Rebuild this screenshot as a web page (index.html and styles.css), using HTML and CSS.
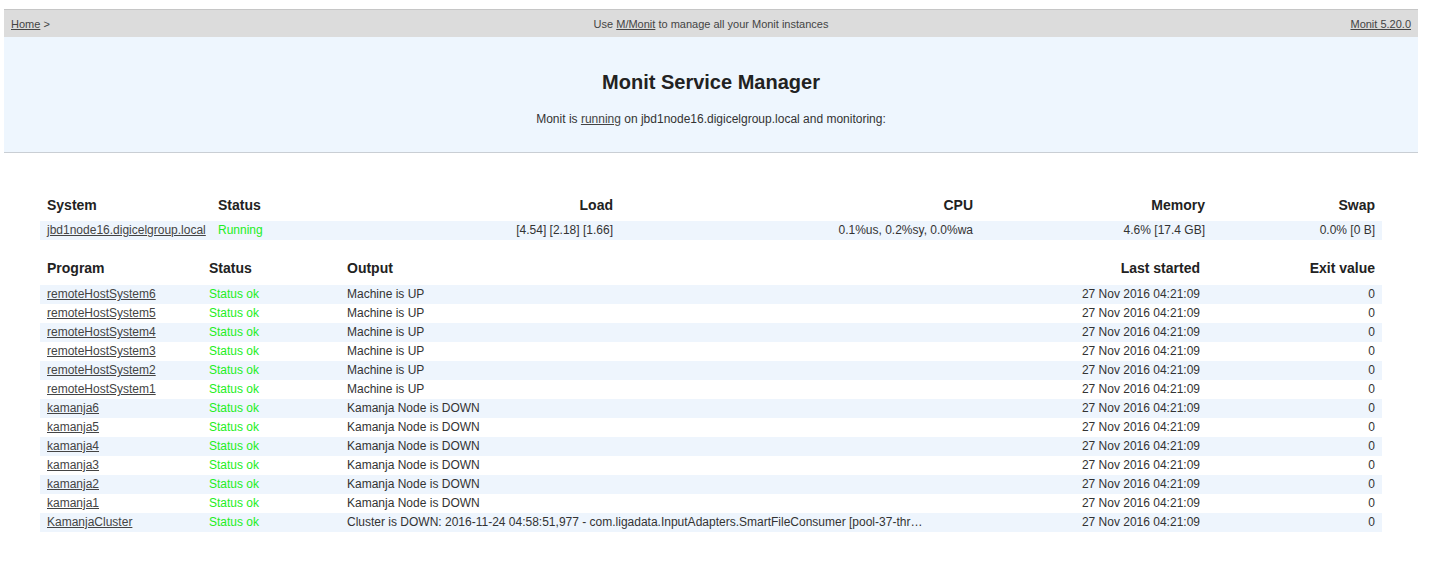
FILE: index.html
```html
<!DOCTYPE html>
<html>
<head>
<meta charset="utf-8">
<title>Monit Service Manager</title>
<link rel="stylesheet" href="styles.css">
</head>
<body>
<div class="page">
  <div class="topbar">
    <div class="crumbs"><a href="#">Home</a> &gt;</div>
    <div class="promo">Use <a href="#">M/Monit</a> to manage all your Monit instances</div>
    <div class="version"><a href="#">Monit 5.20.0</a></div>
  </div>
  <div class="header">
    <h1>Monit Service Manager</h1>
    <p>Monit is <a href="#">running</a> on jbd1node16.digicelgroup.local and monitoring:</p>
  </div>
  <div class="content">
    <table class="tbl sys">
      <colgroup><col class="c1"><col class="c2"><col class="c3"><col class="c4"><col class="c5"><col class="c6"></colgroup>
      <thead>
        <tr><th>System</th><th>Status</th><th class="r">Load</th><th class="r">CPU</th><th class="r">Memory</th><th class="r">Swap</th></tr>
      </thead>
      <tbody>
        <tr class="stripe"><td><a href="#">jbd1node16.digicelgroup.local</a></td><td class="ok">Running</td><td class="r">[4.54]&nbsp;[2.18]&nbsp;[1.66]</td><td class="r">0.1%us,&nbsp;0.2%sy,&nbsp;0.0%wa</td><td class="r">4.6% [17.4&nbsp;GB]</td><td class="r">0.0% [0&nbsp;B]</td></tr>
      </tbody>
    </table>
    <table class="tbl prog">
      <colgroup><col class="p1"><col class="p2"><col class="p3"><col class="p4"><col class="p5"></colgroup>
      <thead>
        <tr><th>Program</th><th>Status</th><th>Output</th><th class="r">Last started</th><th class="r">Exit value</th></tr>
      </thead>
      <tbody>
        <tr class="stripe"><td><a href="#">remoteHostSystem6</a></td><td class="ok">Status ok</td><td>Machine is UP</td><td class="r">27 Nov 2016 04:21:09</td><td class="r">0</td></tr>
        <tr><td><a href="#">remoteHostSystem5</a></td><td class="ok">Status ok</td><td>Machine is UP</td><td class="r">27 Nov 2016 04:21:09</td><td class="r">0</td></tr>
        <tr class="stripe"><td><a href="#">remoteHostSystem4</a></td><td class="ok">Status ok</td><td>Machine is UP</td><td class="r">27 Nov 2016 04:21:09</td><td class="r">0</td></tr>
        <tr><td><a href="#">remoteHostSystem3</a></td><td class="ok">Status ok</td><td>Machine is UP</td><td class="r">27 Nov 2016 04:21:09</td><td class="r">0</td></tr>
        <tr class="stripe"><td><a href="#">remoteHostSystem2</a></td><td class="ok">Status ok</td><td>Machine is UP</td><td class="r">27 Nov 2016 04:21:09</td><td class="r">0</td></tr>
        <tr><td><a href="#">remoteHostSystem1</a></td><td class="ok">Status ok</td><td>Machine is UP</td><td class="r">27 Nov 2016 04:21:09</td><td class="r">0</td></tr>
        <tr class="stripe"><td><a href="#">kamanja6</a></td><td class="ok">Status ok</td><td>Kamanja Node is DOWN</td><td class="r">27 Nov 2016 04:21:09</td><td class="r">0</td></tr>
        <tr><td><a href="#">kamanja5</a></td><td class="ok">Status ok</td><td>Kamanja Node is DOWN</td><td class="r">27 Nov 2016 04:21:09</td><td class="r">0</td></tr>
        <tr class="stripe"><td><a href="#">kamanja4</a></td><td class="ok">Status ok</td><td>Kamanja Node is DOWN</td><td class="r">27 Nov 2016 04:21:09</td><td class="r">0</td></tr>
        <tr><td><a href="#">kamanja3</a></td><td class="ok">Status ok</td><td>Kamanja Node is DOWN</td><td class="r">27 Nov 2016 04:21:09</td><td class="r">0</td></tr>
        <tr class="stripe"><td><a href="#">kamanja2</a></td><td class="ok">Status ok</td><td>Kamanja Node is DOWN</td><td class="r">27 Nov 2016 04:21:09</td><td class="r">0</td></tr>
        <tr><td><a href="#">kamanja1</a></td><td class="ok">Status ok</td><td>Kamanja Node is DOWN</td><td class="r">27 Nov 2016 04:21:09</td><td class="r">0</td></tr>
        <tr class="stripe"><td><a href="#">KamanjaCluster</a></td><td class="ok">Status ok</td><td>Cluster is DOWN: 2016-11-24 04:58:51,977 - com.ligadata.InputAdapters.SmartFileConsumer [pool-37-thr…</td><td class="r">27 Nov 2016 04:21:09</td><td class="r">0</td></tr>
      </tbody>
    </table>
  </div>
</div>
</body>
</html>
```

FILE: styles.css
```css
html, body {
  margin: 0;
  padding: 0;
  background: #fff;
}
body {
  font-family: "Liberation Sans", Arial, sans-serif;
  font-size: 12px;
  color: #333;
}
a {
  color: #444;
  text-decoration: underline;
}
.page {
  margin: 9px 14px 0 4px;
}
.topbar {
  display: flex;
  align-items: center;
  justify-content: space-between;
  height: 27px;
  border-top: 1px solid #c6c6c6;
  background: #dcdcdc;
  padding: 0 7px;
  font-size: 11px;
  color: #444;
}
.topbar > div {
  flex: 1 1 0;
}
.promo {
  text-align: center;
}
.version {
  text-align: right;
}
.header {
  background: #eef6fe;
  border-bottom: 1px solid #c9ced4;
  padding: 33px 0 25px;
  text-align: center;
}
.header h1 {
  margin: 0;
  font-size: 20px;
  line-height: 24px;
  font-weight: bold;
  color: #222;
}
.header p {
  margin: 17px 0 0;
  line-height: 16px;
  font-size: 12px;
  color: #333;
}
.content {
  padding: 41px 36px 0;
}
.tbl {
  width: 100%;
  border-collapse: collapse;
  table-layout: fixed;
}
.tbl th, .tbl td {
  padding: 0 7px;
  text-align: left;
  white-space: nowrap;
  overflow: hidden;
}
.tbl th {
  font-size: 14px;
  font-weight: bold;
  color: #222;
  vertical-align: middle;
}
.tbl td {
  height: 19px;
  line-height: 19px;
}
.tbl .r {
  text-align: right;
}
.tbl .stripe td {
  background: #eef5fd;
}
.tbl .ok {
  color: #22ee22;
}
.sys th {
  height: 21px;
  padding-bottom: 6px;
}
.prog {
  margin-top: 19px;
}
.prog th {
  height: 18px;
  padding-bottom: 8px;
}
.c1 { width: 171px; }
.c2 { width: 209px; }
.c3 { width: 200px; }
.c4 { width: 360px; }
.c5 { width: 232px; }
.c6 { width: 170px; }
.p1 { width: 162px; }
.p2 { width: 138px; }
.p3 { width: 710px; }
.p4 { width: 157px; }
.p5 { width: 175px; }
```
